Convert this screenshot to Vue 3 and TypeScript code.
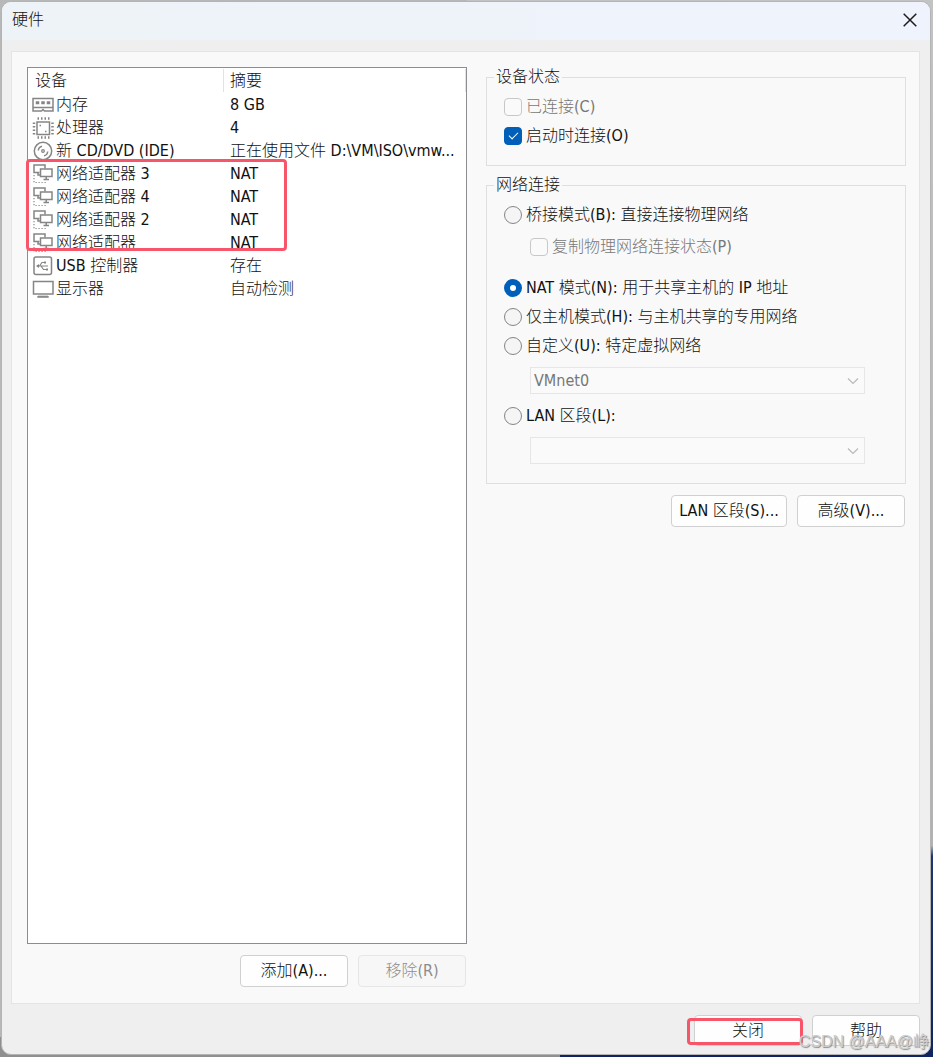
<script setup lang="ts">
import { ref } from 'vue'

type IconName = 'memory' | 'cpu' | 'disc' | 'network' | 'usb' | 'display'

interface Device {
  icon: IconName
  name: string
  summary: string
}

const devices: Device[] = [
  { icon: 'memory', name: '内存', summary: '8 GB' },
  { icon: 'cpu', name: '处理器', summary: '4' },
  { icon: 'disc', name: '新 CD/DVD (IDE)', summary: '正在使用文件 D:\\VM\\ISO\\vmw...' },
  { icon: 'network', name: '网络适配器 3', summary: 'NAT' },
  { icon: 'network', name: '网络适配器 4', summary: 'NAT' },
  { icon: 'network', name: '网络适配器 2', summary: 'NAT' },
  { icon: 'network', name: '网络适配器', summary: 'NAT' },
  { icon: 'usb', name: 'USB 控制器', summary: '存在' },
  { icon: 'display', name: '显示器', summary: '自动检测' },
]

const connected = ref(false)
const connectAtStart = ref(true)
const replicate = ref(false)
const mode = ref('nat')
const vmnet = ref('VMnet0')
const segment = ref('')
</script>

<template>
  <div class="desktop">
    <main class="window">
      <header class="titlebar">
        <h1>硬件</h1>
        <button class="close" type="button" aria-label="关闭窗口">
          <svg viewBox="0 0 14 14" width="14" height="14"><path d="M.7.7 13.3 13.3M13.3.7.7 13.3" fill="none" stroke="#1c1c1c" stroke-width="1.5" /></svg>
        </button>
      </header>

      <section class="panel">
        <div class="left">
          <div class="list">
            <table>
              <colgroup><col class="col-name" /><col /></colgroup>
              <thead>
                <tr><th scope="col"><span>设备</span></th><th scope="col"><span>摘要</span></th></tr>
              </thead>
              <tbody>
                <tr v-for="device in devices" :key="device.name">
                  <td>
                    <div class="device">
                      <svg class="icon" viewBox="0 0 22 22" width="22" height="22" fill="none" stroke="#858585" stroke-width="1.5">
                        <g v-if="device.icon === 'memory'">
                          <path d="M1 4.500h20v12.500h-8.500l-1.500-1.500-1.500 1.500H1zM1 13.500h20" />
                          <path d="M4.500 8h2v1.500h-2zM10 8h2v1.500h-2zM15.500 8h2v1.500h-2z" />
                        </g>
                        <g v-else-if="device.icon === 'cpu'">
                          <path d="M5 5h12.500v12.500H5z" />
                          <path d="M5.500 1.500h12M5.500 20.500h12" stroke-width="2.500" stroke-dasharray="1.500 2" />
                          <path d="M2 5.500v12M20.500 5.500v12" stroke-width="2.500" stroke-dasharray="1.500 2" />
                          <path d="M7.500 8.500h1.500M13 14.500h1.500" />
                        </g>
                        <g v-else-if="device.icon === 'disc'">
                          <circle cx="11" cy="11" r="8.700" />
                          <circle cx="11" cy="11" r="1.300" stroke-width="1.300" />
                          <path d="M6.300 10.500a4.700 4.700 0 0 1 3.700-4.300M15.700 11.500a4.700 4.700 0 0 1-3.700 4.300" />
                        </g>
                        <g v-else-if="device.icon === 'network'">
                          <path d="M7.500 9.500H2V2h11v3.500M6 9.500V12h2" />
                          <path d="M8.500 6h11.500v7.500H8.500zM14.200 13.500v2.500M11.500 16.500h5.500" />
                          <path d="M2 12v7.500h13" stroke-width="1.200" stroke-dasharray="1.200 1.800" />
                        </g>
                        <g v-else-if="device.icon === 'usb'">
                          <rect x="2" y="2" width="17.500" height="17.500" rx="2" />
                          <path d="M5 11h11M7.500 11l2.500-3.500h2M9 11l2.500 3.500h3" stroke-width="1.200" />
                          <path d="m4 11 3-2v4zM12 6.500h2v2h-2zM14 13.500h2v2h-2z" fill="#858585" stroke="none" />
                        </g>
                        <g v-else>
                          <path d="M1.500 3.500h19.500v12.500H1.500z" />
                          <path d="M6 18.200h10l.5 1H5.500z" fill="#858585" stroke-width="1" />
                        </g>
                      </svg>
                      <span>{{ device.name }}</span>
                    </div>
                  </td>
                  <td>{{ device.summary }}</td>
                </tr>
              </tbody>
            </table>
            <div class="mark mark-rows"></div>
          </div>
          <div class="actions">
            <button class="btn" type="button">添加(A)...</button>
            <button class="btn" type="button" disabled>移除(R)</button>
          </div>
        </div>

        <div class="right">
          <fieldset class="status">
            <legend>设备状态</legend>
            <label class="option disabled"><input v-model="connected" type="checkbox" disabled /><span>已连接(C)</span></label>
            <label class="option"><input v-model="connectAtStart" type="checkbox" /><span>启动时连接(O)</span></label>
          </fieldset>

          <fieldset class="network">
            <legend>网络连接</legend>
            <label class="option"><input v-model="mode" type="radio" name="mode" value="bridge" /><span>桥接模式(B): 直接连接物理网络</span></label>
            <label class="option nested disabled"><input v-model="replicate" type="checkbox" disabled /><span>复制物理网络连接状态(P)</span></label>
            <label class="option"><input v-model="mode" type="radio" name="mode" value="nat" /><span>NAT 模式(N): 用于共享主机的 IP 地址</span></label>
            <label class="option"><input v-model="mode" type="radio" name="mode" value="host" /><span>仅主机模式(H): 与主机共享的专用网络</span></label>
            <label class="option"><input v-model="mode" type="radio" name="mode" value="custom" /><span>自定义(U): 特定虚拟网络</span></label>
            <div class="select">
              <select v-model="vmnet" aria-label="特定虚拟网络" disabled><option>VMnet0</option></select>
              <svg viewBox="0 0 12 8" width="12" height="8"><path d="m1 1.500 5 5 5-5" fill="none" stroke="#b9b9b9" stroke-width="1.200" /></svg>
            </div>
            <label class="option"><input v-model="mode" type="radio" name="mode" value="lan" /><span>LAN 区段(L):</span></label>
            <div class="select">
              <select v-model="segment" aria-label="LAN 区段" disabled><option value=""></option></select>
              <svg viewBox="0 0 12 8" width="12" height="8"><path d="m1 1.500 5 5 5-5" fill="none" stroke="#b9b9b9" stroke-width="1.200" /></svg>
            </div>
          </fieldset>

          <div class="actions">
            <button class="btn wide" type="button">LAN 区段(S)...</button>
            <button class="btn" type="button">高级(V)...</button>
          </div>
        </div>
      </section>

      <footer class="footer">
        <div class="marked">
          <button class="btn" type="button">关闭</button>
          <div class="mark mark-close"></div>
        </div>
        <button class="btn" type="button">帮助</button>
      </footer>
    </main>
    <div class="watermark">CSDN @AAA@峥</div>
  </div>
</template>

<style>
body {
  margin: 0;
}
</style>

<style scoped>
* {
  box-sizing: border-box;
}
.desktop {
  position: relative;
  display: flex;
  min-height: 100vh;
  padding: 1px 2px 2px 1px;
  background:
    linear-gradient(90deg, #8f8f8f 0%, #8f8f8f 60%, transparent 60%) bottom / 100% 20px no-repeat,
    linear-gradient(90deg, #b8b8b8 50%, transparent 50%),
    linear-gradient(#c3c3c3 0%, #b2b2b2 80%, #1d3470 81%, #10255f 100%);
  color: #111;
  font: 300 16px/20px "DejaVu Sans Condensed", "Noto Sans CJK SC Light", "Noto Sans CJK SC", sans-serif;
}
.window {
  flex: 1;
  display: flex;
  flex-direction: column;
  min-width: 0;
  border: 1px solid #b4b4b4;
  border-radius: 10px;
  background: #efefef;
  overflow: hidden;
}
.titlebar {
  display: flex;
  align-items: center;
  justify-content: space-between;
  height: 38px;
  padding: 0 8px 2px 10px;
  background: linear-gradient(90deg, #eef3f8, #eff3fd);
}
h1 {
  margin: 0;
  font-size: 16px;
  font-weight: 400;
}
.close {
  display: grid;
  place-items: center;
  width: 24px;
  height: 24px;
  padding: 0;
  border: 0;
  background: none;
}
.panel {
  flex: 1;
  display: grid;
  grid-template-columns: 22fr 21fr;
  gap: 19px;
  margin: 11px 10px 0 9px;
  padding: 15px 13px 16px 15px;
  border: 1px solid #e4e4e4;
  background: #f9f9f9;
}
.left,
.right {
  display: flex;
  flex-direction: column;
  min-width: 0;
}
.list {
  position: relative;
  flex: 1;
  border: 1px solid #8b8d92;
  background: #fff;
}
table {
  width: 100%;
  table-layout: fixed;
  border-collapse: collapse;
}
.col-name {
  width: 196px;
}
th {
  height: 25px;
  padding: 1px 0;
  font-weight: inherit;
  text-align: left;
}
th span {
  display: block;
  height: 23px;
  padding: 2px 0 0 7px;
  border-right: 1px solid #e2e2e2;
}
td {
  height: 23px;
  padding: 0 0 0 6px;
  white-space: nowrap;
}
th:last-child span {
  padding-left: 6px;
}
td:first-child {
  padding-left: 4px;
}
.device {
  display: flex;
  align-items: center;
  gap: 2px;
  height: 22px;
}
.icon {
  flex: none;
}
.mark {
  position: absolute;
  border: 3px solid #f7566a;
  border-radius: 4px;
  pointer-events: none;
}
.mark-rows {
  top: 91px;
  left: -2px;
  width: 261px;
  height: 92px;
}
.mark-close {
  top: 3px;
  left: -7px;
  width: 116px;
  height: 27px;
}
.actions {
  display: flex;
  justify-content: flex-end;
  gap: 10px;
  margin-top: 11px;
  padding-right: 1px;
}
.btn {
  width: 108px;
  height: 32px;
  padding: 0;
  border: 1px solid #d0d0d0;
  border-radius: 4px;
  background: #fefefe;
  color: #111;
  font: inherit;
  white-space: nowrap;
}
.btn.wide {
  width: 116px;
}
.btn:disabled {
  border-color: #e6e6e6;
  background: #f7f7f7;
  color: #8c8c8c;
}
fieldset {
  display: flex;
  flex-direction: column;
  min-width: 0;
  margin: 0;
  padding: 10px 17px 19px;
  border: 1px solid #dfdfdf;
}
.network {
  margin-top: 9px;
}
legend {
  margin-left: -10px;
  padding: 0 2px;
}
.option {
  display: flex;
  align-items: center;
  gap: 4px;
  height: 20px;
  white-space: nowrap;
}
.option + .option {
  margin-top: 9px;
}
.option + .nested {
  margin: 12px 0 12px 26px;
}
.disabled {
  color: #777;
}
input {
  appearance: none;
  flex: none;
  display: grid;
  place-items: center;
  width: 18px;
  height: 18px;
  margin: 0;
  border: 1px solid #858585;
  border-radius: 4px;
  background: #f5f5f5;
}
input[type='radio'] {
  border-radius: 50%;
}
input:disabled {
  border-color: #c8c8c8;
  background: #fafafa;
}
input:checked {
  border-color: #005fb8;
  background: #005fb8;
}
input[type='radio']:checked {
  border-width: 6px;
  background: #fff;
}
input[type='checkbox']:checked::after {
  content: '';
  width: 8px;
  height: 4px;
  margin-bottom: 3px;
  border: solid #fff;
  border-width: 0 0 1px 1px;
  transform: rotate(-45deg);
}
.select {
  position: relative;
  margin: 11px 23px 12px 26px;
}
.select:last-child {
  margin-bottom: 0;
}
.select select {
  appearance: none;
  display: block;
  width: 100%;
  height: 27px;
  padding: 0 24px 0 3px;
  border: 1px solid #e6e6e6;
  border-radius: 0;
  background: #fafafa;
  color: #777;
  font: inherit;
  opacity: 1;
}
.select svg {
  position: absolute;
  top: 10px;
  right: 6px;
}
.footer {
  display: flex;
  justify-content: flex-end;
  gap: 10px;
  padding: 11px 10px 8px;
}
.footer .btn {
  height: 31px;
}
.marked {
  position: relative;
}
.watermark {
  position: absolute;
  right: 4px;
  bottom: 5px;
  color: #cdcdcd;
  font: 400 16px/20px "Liberation Sans", "Noto Sans CJK SC", sans-serif;
  text-shadow: 1px 1px 1px #8a8a8a;
}
</style>
